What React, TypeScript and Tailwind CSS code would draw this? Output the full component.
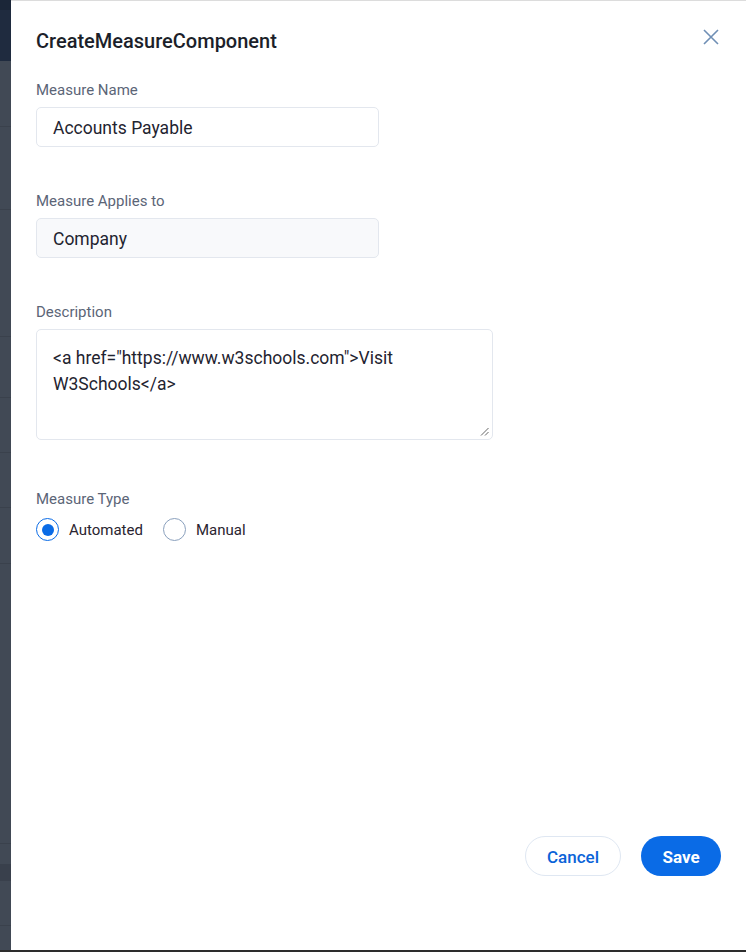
import React from "react";

function Line() {
  return <div className="h-px bg-[#3a414c]" />;
}

export default function App() {
  return (
    <div
      className="w-[746px] h-[952px] flex flex-col overflow-hidden bg-white"
      style={{ fontFamily: "Roboto, 'Liberation Sans', sans-serif" }}
    >
      <div className="flex flex-1 min-h-0">
        {/* backdrop strip */}
        <div className="w-[11px] flex flex-col bg-[#414955]">
          <div className="h-[10px] bg-[#1b2638]" />
          <div className="h-[51px] bg-[#1f2b3f]" />
          <div className="h-[65px]" />
          <Line />
          <div className="h-[82px]" />
          <Line />
          <div className="h-[126px]" />
          <Line />
          <div className="h-[60px]" />
          <Line />
          <div className="h-[54px]" />
          <Line />
          <div className="h-[54px]" />
          <Line />
          <div className="h-[55px]" />
          <Line />
          <div className="h-[279px]" />
          <Line />
          <div className="h-[20px]" />
          <div className="h-[17px] bg-[#39404c]" />
          <div className="h-[44px]" />
          <Line />
          <div className="flex-1" />
        </div>

        {/* modal */}
        <div className="flex-1 flex flex-col border-t border-[#dcdcdc] relative">
          <button className="absolute right-[27px] top-[28px] text-[#6f8fb5]" aria-label="close">
            <svg width="16" height="16" viewBox="0 0 16 16" fill="none" stroke="currentColor" strokeWidth="1.6">
              <path d="M1 1 L15 15 M15 1 L1 15" />
            </svg>
          </button>

          <div className="pl-[25px] pt-[26px]">
            <h1 className="text-[20px] leading-[28px] font-medium text-[#1c1f2a]">CreateMeasureComponent</h1>

            <div className="mt-[25px]">
              <div className="text-[15px] leading-[20px] text-[#5b6577]">Measure Name</div>
              <div className="mt-[7px] w-[343px] h-[40px] border border-[#e3e7ee] rounded-[5px] flex items-center px-[16px] pt-[2px] text-[17.5px] text-[#1f2430]">
                Accounts Payable
              </div>
            </div>

            <div className="mt-[44px]">
              <div className="text-[15px] leading-[20px] text-[#5b6577]">Measure Applies to</div>
              <div className="mt-[7px] w-[343px] h-[40px] border border-[#e3e7ee] bg-[#f8f9fb] rounded-[5px] flex items-center px-[16px] pt-[2px] text-[17.5px] text-[#1f2430]">
                Company
              </div>
            </div>

            <div className="mt-[44px]">
              <div className="text-[15px] leading-[20px] text-[#5b6577]">Description</div>
              <div className="mt-[7px] w-[457px] h-[111px] border border-[#e3e7ee] rounded-[5px] relative pl-[16px] pr-[16px] pt-[15px] text-[17.5px] leading-[26px] text-[#1f2430]">
                <div className="w-[380px]">&lt;a href="https://www.w3schools.com"&gt;Visit W3Schools&lt;/a&gt;</div>
                <svg className="absolute right-[3px] bottom-[3px]" width="9" height="9" viewBox="0 0 9 9" stroke="#555" strokeWidth="0.9">
                  <path d="M8.5 1 L1 8.5 M8.5 5 L5 8.5" />
                </svg>
              </div>
            </div>

            <div className="mt-[49px]">
              <div className="text-[15px] leading-[20px] text-[#5b6577]">Measure Type</div>
              <div className="mt-[9px] flex items-center">
                <div className="w-[23px] h-[23px] rounded-full border-[1.5px] border-[#0a6be6] flex items-center justify-center">
                  <div className="w-[12px] h-[12px] rounded-full bg-[#0a6be6]" />
                </div>
                <span className="ml-[10px] translate-y-[1px] text-[15px] text-[#2a2430]">Automated</span>
                <div className="ml-[20px] w-[23px] h-[23px] rounded-full border-[1.2px] border-[#8aa0bd]" />
                <span className="ml-[10px] translate-y-[1px] text-[15px] text-[#2a2430]">Manual</span>
              </div>
            </div>
          </div>

          <div className="flex-1" />

          <div className="flex justify-end pr-[25px] pb-[74px] gap-[20px]">
            <button className="w-[96px] h-[40px] rounded-full border border-[#dfe7f2] text-[#0a63d8] text-[17px] font-medium flex items-center justify-center pt-[3px]">
              Cancel
            </button>
            <button className="w-[80px] h-[40px] rounded-full bg-[#0a6be6] text-white text-[17px] font-bold flex items-center justify-center pt-[3px]">
              Save
            </button>
          </div>
        </div>
      </div>
      <div className="h-[2px] bg-[#2d2d2d]" />
    </div>
  );
}
